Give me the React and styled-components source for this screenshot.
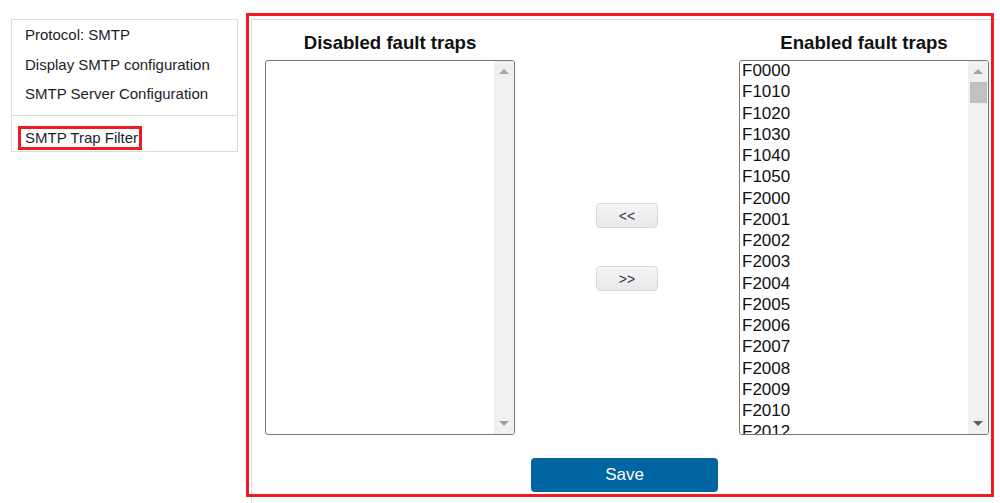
import React from "react";
import styled, { createGlobalStyle } from "styled-components";

const GlobalStyle = createGlobalStyle`
  html, body {
    margin: 0;
    padding: 0;
    background: #fff;
    overflow: hidden;
  }
  body {
    font-family: "Liberation Sans", Arial, sans-serif;
    color: #222;
  }
  * {
    box-sizing: border-box;
  }
`;

const enabledTraps = [
  "F0000", "F1010", "F1020", "F1030", "F1040", "F1050",
  "F2000", "F2001", "F2002", "F2003", "F2004", "F2005",
  "F2006", "F2007", "F2008", "F2009", "F2010", "F2012",
];

const App = () => {
  return (
    <>
      <GlobalStyle />
      <Page>
        <Sidebar>
          <MenuGroup>
            <MenuItem>Protocol: SMTP</MenuItem>
            <MenuItem>Display SMTP configuration</MenuItem>
            <MenuItem>SMTP Server Configuration</MenuItem>
          </MenuGroup>
          <ActiveGroup>
            <ActiveItem>SMTP Trap Filter</ActiveItem>
          </ActiveGroup>
        </Sidebar>

        <Main>
          <Highlight />
          <Columns>
            <Column>
              <Heading>Disabled fault traps</Heading>
              <ListBox>
                <Options />
                <ScrollBar>
                  <Arrow up />
                  <Track />
                  <Arrow />
                </ScrollBar>
              </ListBox>
            </Column>

            <Mover>
              <MoveButton>&lt;&lt;</MoveButton>
              <MoveButton>&gt;&gt;</MoveButton>
            </Mover>

            <Column>
              <Heading>Enabled fault traps</Heading>
              <ListBox>
                <Options>
                  {enabledTraps.map((t) => (
                    <Option key={t}>{t}</Option>
                  ))}
                </Options>
                <ScrollBar>
                  <Arrow up />
                  <Thumb />
                  <Track />
                  <Arrow active />
                </ScrollBar>
              </ListBox>
            </Column>
          </Columns>

          <SaveRow>
            <SaveButton>Save</SaveButton>
          </SaveRow>
        </Main>
      </Page>
    </>
  );
};

const Page = styled.div`
  display: flex;
  align-items: flex-start;
  padding-left: 11px;
  height: 503px;
  overflow: hidden;
`;

const Sidebar = styled.nav`
  width: 227px;
  margin-top: 19px;
  border: 1px solid #dcdcdc;
  display: flex;
  flex-direction: column;
`;

const MenuGroup = styled.div`
  padding-bottom: 6px;
  border-bottom: 1px solid #dcdcdc;
`;

const MenuItem = styled.div`
  padding: 6px 13px 6px 13px;
  font-size: 15px;
  line-height: 17.5px;
  color: #1c1c2a;
`;

const ActiveGroup = styled.div`
  padding: 10px 0 1px 6px;
`;

const ActiveItem = styled.div`
  display: inline-block;
  border: 3px solid #ed1c24;
  padding: 0 1px 0 4px;
  font-size: 15px;
  line-height: 18px;
  color: #1c1c2a;
`;

const Main = styled.section`
  position: relative;
  width: 746px;
  height: 484px;
  margin-left: 13px;
  margin-top: 19px;
  border-left: 1px solid #dcdcdc;
  border-top: 1px solid #dcdcdc;
  padding: 12px 0 0 13px;
`;

const Highlight = styled.div`
  position: absolute;
  left: -6px;
  top: -7px;
  width: 748px;
  height: 484px;
  border: 3px solid #ed1c24;
  pointer-events: none;
`;

const Columns = styled.div`
  display: grid;
  grid-template-columns: 250px 224px 250px;
  align-items: start;
`;

const Column = styled.div`
  display: flex;
  flex-direction: column;
  align-items: stretch;
`;

const Heading = styled.h2`
  margin: 0 0 6px;
  text-align: center;
  font-size: 18.6px;
  line-height: 22px;
  font-weight: bold;
  color: #111;
  white-space: nowrap;
`;

const ListBox = styled.div`
  display: flex;
  height: 375px;
  border: 1px solid #767676;
  border-radius: 3px;
  overflow: hidden;
  background: #fff;
`;

const Options = styled.div`
  flex: 1;
  overflow: hidden;
  padding: 0 2px;
  margin-top: -1px;
`;

const Option = styled.div`
  font-size: 17px;
  line-height: 21.25px;
  color: #111;
  white-space: nowrap;
`;

const ScrollBar = styled.div`
  width: 20px;
  background: #f0f0f0;
  display: flex;
  flex-direction: column;
  align-items: center;
`;

const Arrow = styled.div`
  height: 21px;
  width: 100%;
  display: flex;
  align-items: center;
  justify-content: center;
  flex-shrink: 0;

  &::after {
    content: "";
    width: 0;
    height: 0;
    border-left: 5px solid transparent;
    border-right: 5px solid transparent;
    ${({ up, active }) =>
      up
        ? `border-bottom: 5px solid #a3a3a3;`
        : `border-top: 5px solid ${active ? "#606060" : "#a3a3a3"};`}
  }
`;

const Thumb = styled.div`
  width: 17px;
  height: 21px;
  background: #c1c1c1;
  flex-shrink: 0;
`;

const Track = styled.div`
  flex: 1;
`;

const Mover = styled.div`
  display: flex;
  flex-direction: column;
  align-items: center;
  gap: 38px;
  padding-top: 171px;
`;

const MoveButton = styled.button`
  width: 62px;
  height: 25px;
  padding: 0;
  border: 1px solid #d8d8d8;
  border-radius: 4px;
  background: linear-gradient(#f5f5f5, #e9e9e9);
  font-family: "Liberation Sans", Arial, sans-serif;
  font-size: 14px;
  color: #34354a;
  cursor: pointer;
`;

const SaveRow = styled.div`
  display: flex;
  justify-content: center;
  margin-top: 23px;
  margin-left: -13px;
`;

const SaveButton = styled.button`
  width: 187px;
  height: 34px;
  border: none;
  border-radius: 4px;
  background: #0066a1;
  color: #fff;
  font-family: "Liberation Sans", Arial, sans-serif;
  font-size: 17px;
  cursor: pointer;
`;

export default App;
